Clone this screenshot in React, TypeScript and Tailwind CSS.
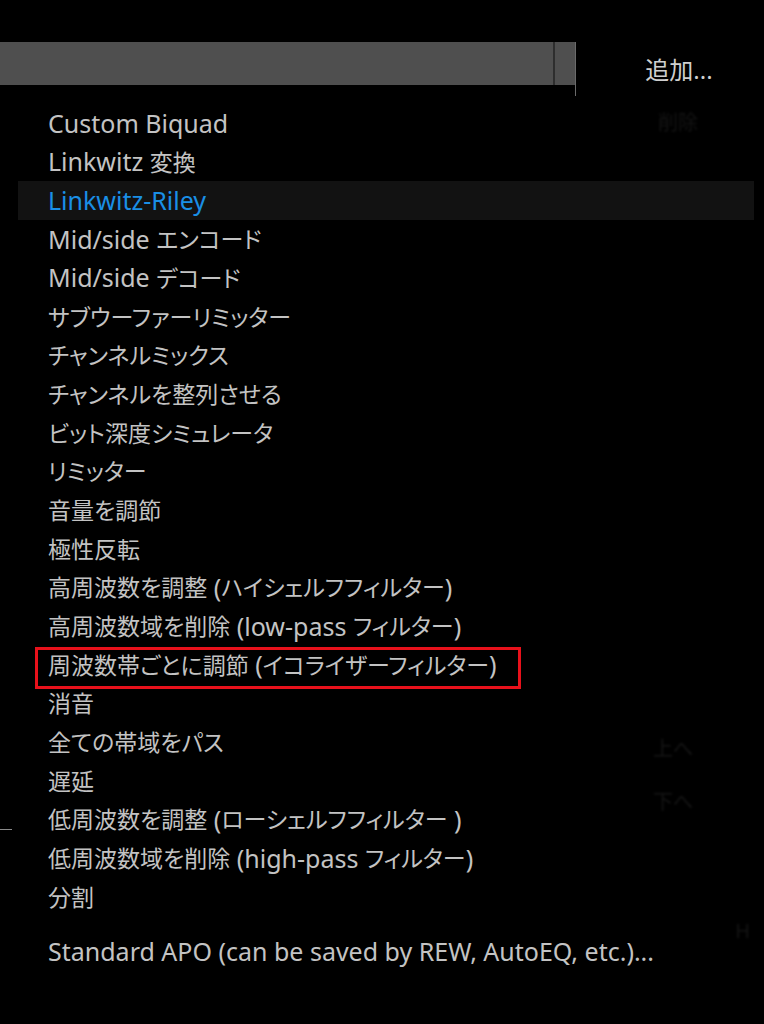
import React from "react";

const items: string[] = [
  "Custom Biquad",
  "Linkwitz 変換",
  "Linkwitz-Riley",
  "Mid/side エンコード",
  "Mid/side デコード",
  "サブウーファーリミッター",
  "チャンネルミックス",
  "チャンネルを整列させる",
  "ビット深度シミュレータ",
  "リミッター",
  "音量を調節",
  "極性反転",
  "高周波数を調整 (ハイシェルフフィルター)",
  "高周波数域を削除 (low-pass フィルター)",
  "周波数帯ごとに調節 (イコライザーフィルター)",
  "消音",
  "全ての帯域をパス",
  "遅延",
  "低周波数を調整 (ローシェルフフィルター )",
  "低周波数域を削除 (high-pass フィルター)",
  "分割",
];

const font = {
  fontFamily: '"Noto Sans", "Noto Sans CJK JP", sans-serif',
};

// latin runs are set a bit larger than the japanese ones
function Label({ text }: { text: string }) {
  const parts = text.split(/([\x00-\x7F]+)/).filter((p) => p !== "");
  return (
    <>
      {parts.map((p, i) =>
        /^[\x00-\x7F]+$/.test(p) ? (
          <span key={i} className="text-[25px] whitespace-pre">
            {p}
          </span>
        ) : (
          <span key={i} className="text-[23px] [font-feature-settings:'palt']">
            {p}
          </span>
        )
      )}
    </>
  );
}

export default function App() {
  return (
    <div
      className="relative w-[764px] h-[1024px] bg-black overflow-hidden"
      style={font}
    >
      {/* background window */}
      <div className="flex pt-[42px]">
        <div className="w-[576px] flex flex-col">
          <div className="h-[43px] bg-[#4f4f4f] flex justify-end border-r border-[#6a6a6a]">
            <div className="w-[22px] border-l-2 border-[#2e2e2e]" />
          </div>
          <div className="h-[11px] border-r border-[#6a6a6a]" />
        </div>
        <div className="flex-1 flex flex-col items-center pt-[10px]">
          <span className="text-[24px] leading-[36px] text-[#cfcfcf] pl-[18px]">
            追加...
          </span>
          <span className="text-[20px] leading-[36px] text-[#141414] blur-[1px] mt-[17px] pl-[16px]">
            削除
          </span>
          <span className="text-[20px] leading-[36px] text-[#161616] blur-[1px] mt-[590px] pl-[6px]">
            上へ
          </span>
          <span className="text-[20px] leading-[36px] text-[#161616] blur-[1px] mt-[17px] pl-[6px]">
            下へ
          </span>
          <span className="self-end text-[20px] leading-[36px] text-[#141414] blur-[1px] mt-[93px] mr-[14px]">
            H
          </span>
        </div>
      </div>
      <div className="absolute left-0 top-[829px] w-[12px] h-px bg-[#8a8a8a]" />

      {/* dropdown menu */}
      <div className="absolute left-[18px] top-[104px] w-[736px] flex flex-col">
        {items.map((item, i) => (
          <div
            key={item}
            className={
              "relative h-[38.7px] flex items-center pl-[30px] whitespace-nowrap " +
              (i === 2 ? "bg-[#121212] text-[#1a8fe6]" : "text-[#c3c3c3]")
            }
          >
            <Label text={item} />
            {i === 14 && (
              <div className="absolute left-[17px] top-[1px] w-[486px] h-[42px] border-[3px] border-[#e8111b]" />
            )}
          </div>
        ))}
        <div className="h-[16px]" />
        <div className="h-[38px] flex items-center pl-[30px] text-[#c3c3c3] whitespace-nowrap">
          <Label text="Standard APO (can be saved by REW, AutoEQ, etc.)..." />
        </div>
      </div>
    </div>
  );
}
